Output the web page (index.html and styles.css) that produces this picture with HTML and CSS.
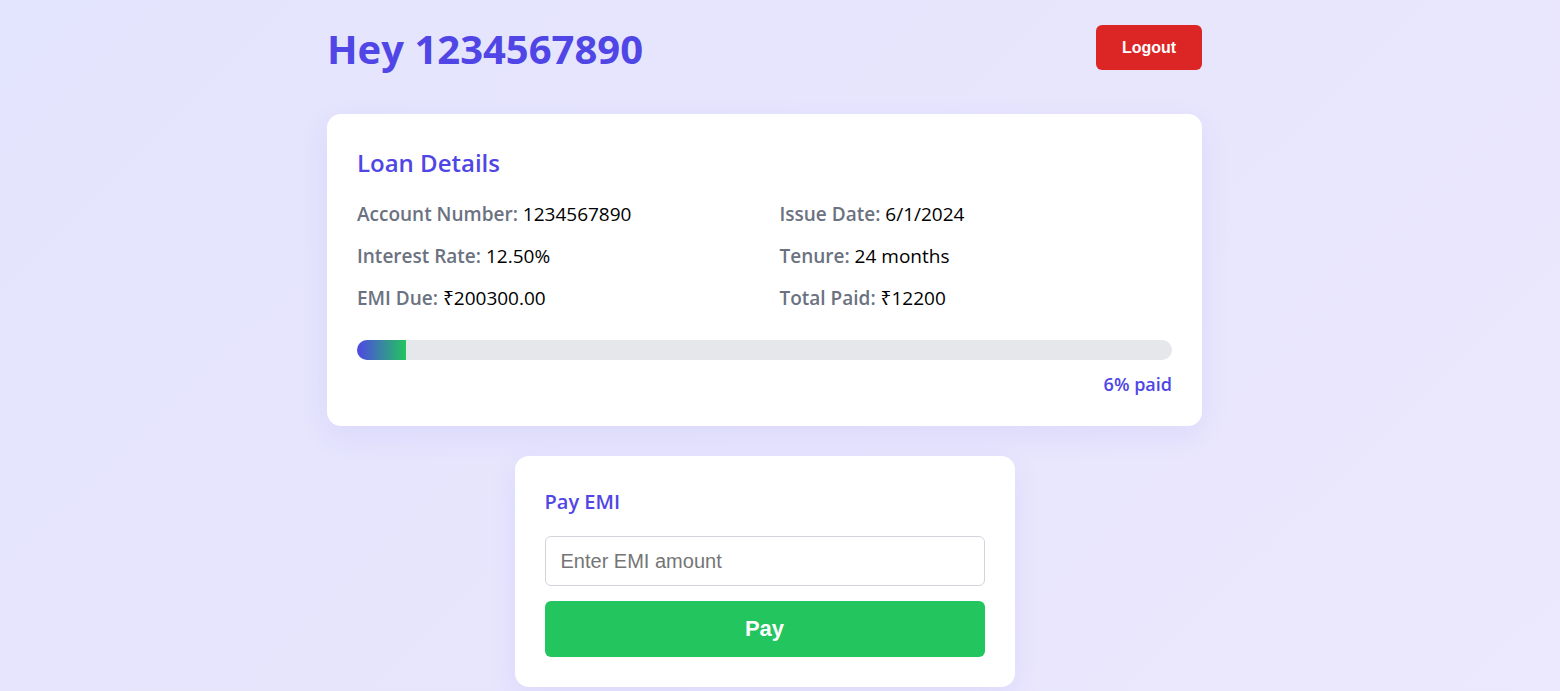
FILE: index.html
```html
<!DOCTYPE html>
<html lang="en">
<head>
<meta charset="utf-8">
<title>Dashboard</title>
<link rel="stylesheet" href="styles.css">
</head>
<body>
<div class="page">
  <header class="top">
    <h1 class="greet">Hey 1234567890</h1>
    <button class="logout">Logout</button>
  </header>

  <section class="card loan">
    <h2 class="card-title">Loan Details</h2>
    <div class="grid">
      <p class="row"><span class="lbl">Account Number:</span> 1234567890</p>
      <p class="row"><span class="lbl">Issue Date:</span> 6/1/2024</p>
      <p class="row"><span class="lbl">Interest Rate:</span> 12.50%</p>
      <p class="row"><span class="lbl">Tenure:</span> 24 months</p>
      <p class="row"><span class="lbl">EMI Due:</span> ₹200300.00</p>
      <p class="row"><span class="lbl">Total Paid:</span> ₹12200</p>
    </div>
    <div class="bar"><div class="fill" style="width:6%"></div></div>
    <p class="paid">6% paid</p>
  </section>

  <section class="card pay">
    <h3 class="pay-title">Pay EMI</h3>
    <input class="amount" type="text" placeholder="Enter EMI amount">
    <button class="pay-btn">Pay</button>
  </section>
</div>
</body>
</html>
```

FILE: styles.css
```css
* { box-sizing: border-box; }
html, body { margin: 0; padding: 0; }
body {
  min-height: 100vh;
  background: linear-gradient(135deg, #e3e4fd 0%, #e8e6fd 60%, #ece8fd 100%);
  font-family: "Open Sans", "Noto Sans", sans-serif;
  padding-right: 31px;
}
.page {
  width: 875px;
  margin: 0 auto;
  padding-top: 25px;
}
.top {
  display: flex;
  justify-content: space-between;
  align-items: flex-start;
}
.greet {
  margin: 0;
  font-size: 40px;
  line-height: 48px;
  font-weight: 700;
  color: #4f46e5;
}
.logout {
  width: 106px;
  height: 45px;
  border: none;
  border-radius: 6px;
  background: #dc2626;
  color: #fff;
  font-family: "Liberation Sans", Arial, sans-serif;
  font-weight: 700;
  font-size: 16px;
}
.card {
  background: #fff;
  border-radius: 14px;
  box-shadow: 0 10px 30px rgba(79, 70, 229, 0.08);
  padding: 30px;
}
.loan {
  margin-top: 41px;
}
.card-title {
  margin: 0;
  font-size: 24px;
  line-height: 38px;
  font-weight: 600;
  color: #4f46e5;
}
.grid {
  display: grid;
  grid-template-columns: 1fr 1fr;
  column-gap: 30px;
  row-gap: 14px;
  margin-top: 18px;
}
.row {
  margin: 0;
  font-size: 19px;
  line-height: 28px;
  color: #000;
}
.lbl {
  color: #6b7280;
  font-weight: 600;
}
.bar {
  margin-top: 28px;
  height: 20px;
  border-radius: 10px;
  background: #e5e7eb;
  overflow: hidden;
}
.fill {
  height: 100%;
  background: linear-gradient(90deg, #4f46e5, #22c55e);
}
.paid {
  margin: 12px 0 0;
  text-align: right;
  font-size: 18px;
  line-height: 24px;
  font-weight: 600;
  color: #4f46e5;
}
.pay {
  width: 500px;
  margin: 30px auto 0;
  display: flex;
  flex-direction: column;
}
.pay-title {
  margin: 0;
  font-size: 20px;
  line-height: 32px;
  font-weight: 600;
  color: #4f46e5;
}
.amount {
  margin-top: 18px;
  height: 50px;
  border: 1px solid #d1d5db;
  border-radius: 6px;
  padding: 0 15px;
  font-family: "Liberation Sans", Arial, sans-serif;
  font-size: 20px;
  color: #111;
  outline: none;
}
.amount::placeholder { color: #757575; }
.pay-btn {
  margin-top: 15px;
  height: 56px;
  border: none;
  border-radius: 6px;
  background: #22c55e;
  color: #fff;
  font-family: "Liberation Sans", Arial, sans-serif;
  font-weight: 700;
  font-size: 22px;
}
```
